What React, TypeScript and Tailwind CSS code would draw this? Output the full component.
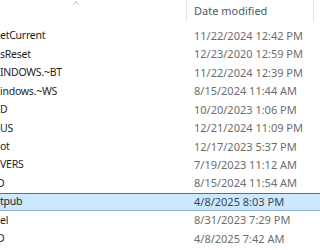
import { ChevronUp } from "lucide-react";

interface Row {
  name: string;
  shift: number;
  date: string;
  selected?: boolean;
}

const rows: Row[] = [
  { name: "etCurrent", shift: 0, date: "11/22/2024 12:42 PM" },
  { name: "sReset", shift: 0, date: "12/23/2020 12:59 PM" },
  { name: "INDOWS.~BT", shift: 0, date: "11/22/2024 12:39 PM" },
  { name: "indows.~WS", shift: 0, date: "8/15/2024 11:44 AM" },
  { name: "D", shift: 0, date: "10/20/2023 1:06 PM" },
  { name: "US", shift: 0, date: "12/21/2024 11:09 PM" },
  { name: "ot", shift: 0, date: "12/17/2023 5:37 PM" },
  { name: "VERS", shift: 0, date: "7/19/2023 11:12 AM" },
  { name: "D", shift: 3, date: "8/15/2024 11:54 AM" },
  { name: "tpub", shift: 0, date: "4/8/2025 8:03 PM", selected: true },
  { name: "el", shift: 0, date: "8/31/2023 7:29 PM" },
  { name: "D", shift: 3, date: "4/8/2025 7:42 AM" },
];

export default function App() {
  return (
    <div
      className="w-[320px] h-[250px] overflow-hidden bg-white text-[11px]"
      style={{ fontFamily: '"Noto Sans", "Open Sans", sans-serif' }}
    >
      {/* header */}
      <div className="flex h-[27px]">
        <div className="relative w-[186px]">
          <ChevronUp
            className="absolute left-[71px] -top-[2px] text-[#8a8a8a]"
            size={10}
            strokeWidth={1.5}
          />
        </div>
        <div className="w-px h-[22px] bg-[#e5e5e5]" />
        <div className="w-[126px] pl-[7px] pt-[3px] text-[#4c5a6c]">Date modified</div>
        <div className="w-px h-[22px] bg-[#e5e5e5]" />
      </div>

      {/* rows */}
      <div className="flex flex-col">
        {rows.map((r, i) => (
          <div
            key={i}
            className={
              r.selected
                ? "flex items-center h-[18.45px] bg-[#cce8ff] border-t border-b border-t-[#5f6f7d] border-b-[#8fb3cf]"
                : "flex items-center h-[18.45px]"
            }
          >
            <div className="w-[187px] overflow-hidden whitespace-nowrap text-[10.5px] tracking-[-0.25px] text-[#1e1e1e]">
              <span style={{ marginLeft: -r.shift }}>{r.name}</span>
            </div>
            <div
              className={
                r.selected
                  ? "pl-[7px] whitespace-nowrap text-[#3a4654]"
                  : "pl-[7px] whitespace-nowrap text-[#6d6d6d]"
              }
            >
              {r.date}
            </div>
          </div>
        ))}
      </div>
    </div>
  );
}
